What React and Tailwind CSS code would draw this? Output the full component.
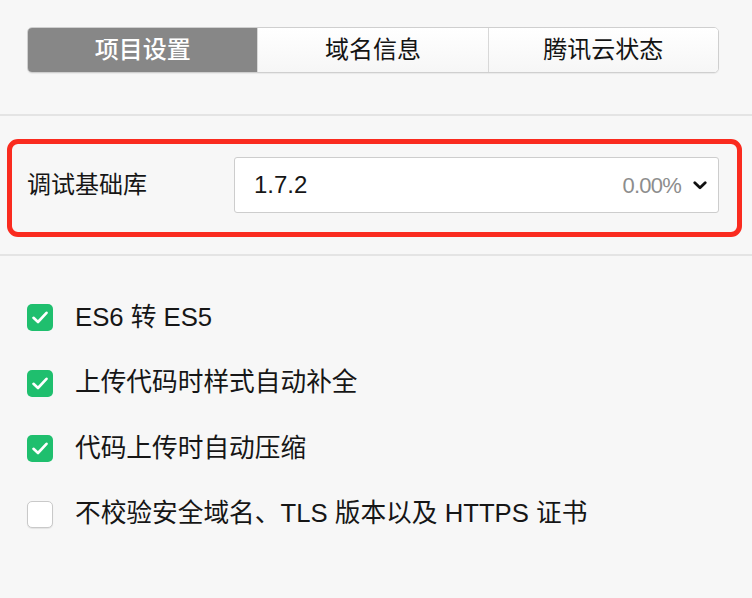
const tabs = ['项目设置', '域名信息', '腾讯云状态'];

const options = [
  { label: 'ES6 转 ES5', checked: true },
  { label: '上传代码时样式自动补全', checked: true },
  { label: '代码上传时自动压缩', checked: true },
  { label: '不校验安全域名、TLS 版本以及 HTTPS 证书', checked: false },
];

const Checkbox = ({ checked }) => {
  if (checked) {
    return (
      <div className="w-[26px] h-[27px] rounded-[5px] bg-[#1fbf6e] flex items-center justify-center shrink-0">
        <svg width="16" height="13" viewBox="0 0 16 13" fill="none">
          <path d="M1.5 6.8 L6 11 L14.5 1.8" stroke="white" strokeWidth="2.6" strokeLinecap="round" strokeLinejoin="round" />
        </svg>
      </div>
    );
  }
  return (
    <div className="w-[26px] h-[27px] rounded-[5px] bg-white border border-[#c9c9c9] shadow-[0_1px_1px_rgba(0,0,0,0.08)] shrink-0" />
  );
};

const App = () => {
  return (
    <div
      className="w-[752px] h-[598px] overflow-hidden bg-[#f7f7f7] text-[#161616]"
      style={{ fontFamily: '"Liberation Sans", "Noto Sans CJK SC", sans-serif' }}
    >
      <div className="pt-[27px] pl-[27px] pr-[33px]">
        <div className="flex h-[46px] rounded-[5px] border border-[#cfcfcf] bg-white shadow-[0_1px_1px_rgba(0,0,0,0.06)] overflow-hidden">
          {tabs.map((tab, i) => (
            <div
              key={tab}
              className={
                i === 0
                  ? 'flex-1 flex items-center justify-center bg-[#878787] text-white text-[24px] font-medium'
                  : 'flex-1 flex items-center justify-center bg-gradient-to-b from-white to-[#f6f6f6] border-l border-[#d8d8d8] text-[#141414] text-[24px]'
              }
            >
              {tab}
            </div>
          ))}
        </div>
      </div>

      <div className="mt-[41px] h-[2px] bg-[#e4e4e4]" />

      <div className="mt-[23px] ml-[7px] mr-[10px] border-[5px] border-[#fa2b1f] rounded-[11px] pt-[13px] pb-[19px] pl-[15px] pr-[18px] flex items-center">
        <div className="w-[207px] text-[24px] leading-none">调试基础库</div>
        <div className="flex-1 h-[56px] bg-white border border-[#cdcdcd] rounded-[3px] flex items-center pl-[19px] pr-[11px]">
          <span className="text-[24px]">1.7.2</span>
          <span className="ml-auto text-[22px] tracking-[-0.8px] text-[#8d8d8d]">0.00%</span>
          <svg className="ml-[12px] mt-[1px]" width="14" height="9" viewBox="0 0 14 9" fill="none">
            <path d="M1.8 1.8 L7 6.8 L12.2 1.8" stroke="#111" strokeWidth="2.8" strokeLinecap="round" strokeLinejoin="round" />
          </svg>
        </div>
      </div>

      <div className="mt-[17px] h-[2px] bg-[#e4e4e4]" />

      <div className="mt-[29px] pl-[27px]">
        {options.map((opt) => (
          <div key={opt.label} className="h-[65.5px] flex items-center gap-[22px]">
            <Checkbox checked={opt.checked} />
            <span className="text-[25.7px] leading-none">{opt.label}</span>
          </div>
        ))}
      </div>
    </div>
  );
};

export default App;
